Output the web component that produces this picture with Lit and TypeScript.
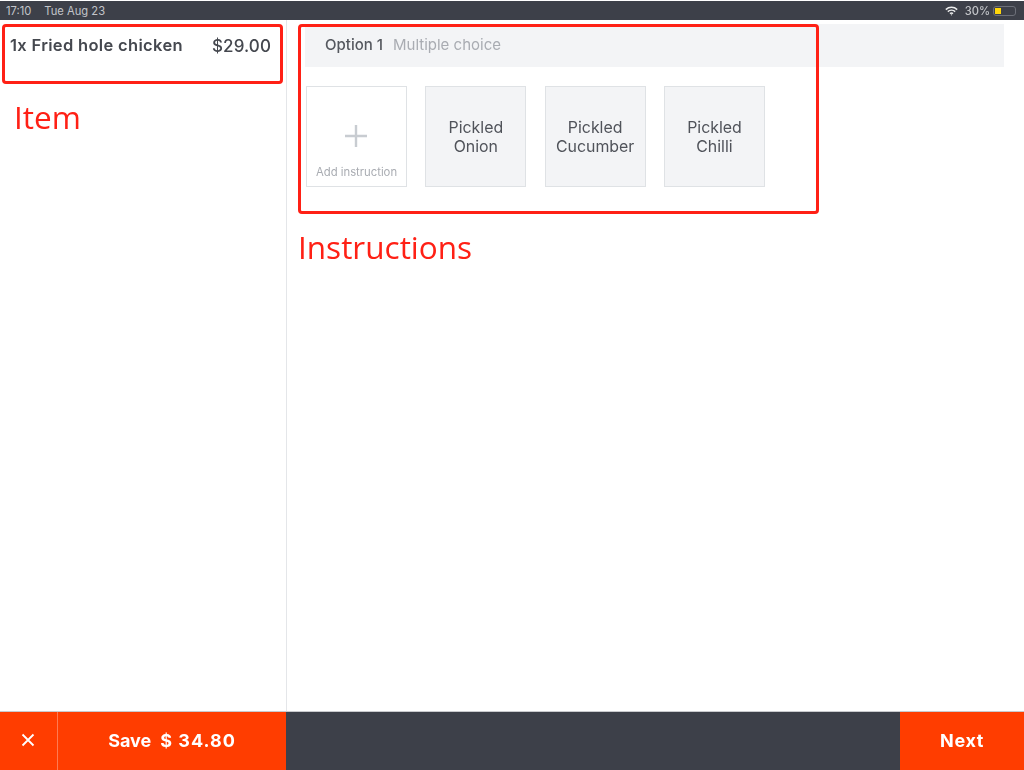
import { LitElement, html, css } from "lit";
import { customElement } from "lit/decorators.js";

@customElement("app-root")
export class AppRoot extends LitElement {
  static styles = css`
    :host { display: block; position: relative; width: 1024px; height: 770px; overflow: hidden; background: #fff; font-family: Inter, "Liberation Sans", sans-serif; color: #3d4049; }
    .page { display: flex; flex-direction: column; height: 770px; filter: blur(0.45px); }
    .status { height: 19px; box-sizing: border-box; margin-top: 1px; background: #3d4049; color: #c3c5c9; display: flex; align-items: center; padding: 0 8px 0 6px; font-size: 11.2px; flex: none; }
    .status .date { margin-left: 13px; }
    .status .right { margin-left: auto; display: flex; align-items: center; gap: 3px; font-weight: 500; }
    .status .right svg { margin-right: 4px; }
    .battery { width: 23px; height: 10px; box-sizing: border-box; border: 1px solid #6d7079; border-radius: 3px; padding: 1px; display: flex; }
    .battery i { display: block; width: 6px; background: #ffd60a; }
    .main { flex: 1; display: flex; min-height: 0; }
    .left { width: 287px; box-sizing: border-box; border-right: 1px solid #e4e6e9; padding: 16px 15px 0 10px; flex: none; }
    .item { display: flex; justify-content: space-between; align-items: flex-start; }
    .item .name { font-size: 16.5px; font-weight: 600; line-height: 19px; color: #45484f; letter-spacing: 0.33px; }
    .item .price { font-size: 17px; font-weight: 500; line-height: 19px; margin-top: 1px; color: #45484f; letter-spacing: 0.1px; }
    .right-pane { flex: 1; padding: 4px 20px 0 18px; }
    .head { height: 43px; background: #f3f4f6; display: flex; align-items: center; padding: 0 0 3px 20px; box-sizing: border-box; gap: 10px; font-size: 15px; }
    .head .opt { font-weight: 500; color: #55585f; }
    .head .type { color: #a9acb2; }
    .cards { display: flex; gap: 18.33px; margin-top: 19px; margin-left: 1px; }
    .card { width: 101px; height: 101px; box-sizing: border-box; border: 1px solid #dfe2e5; background: #f3f4f6; display: flex; align-items: center; justify-content: center; text-align: center; font-size: 15.9px; line-height: 18.5px; color: #50535a; padding-top: 2px; }
    .card.add { background: #fff; flex-direction: column; justify-content: flex-start; padding: 37px 0 0; }
    .card.add svg { display: block; margin-right: 2px; }
    .card.add span { font-size: 11.3px; line-height: 13px; color: #a9acb2; margin-top: 18px; white-space: nowrap; }
    .bottom { height: 59px; flex: none; display: flex; background: #3d4049; color: #fff; border-top: 1px solid #c9cacd; box-sizing: border-box; }
    .close { width: 58px; background: #ff3d00; display: flex; align-items: center; justify-content: center; border-right: 1px solid #ff7a52; flex: none; padding: 0 2px 2px 0; box-sizing: border-box; }
    .save { width: 228px; background: #ff3d00; display: flex; align-items: center; justify-content: center; gap: 9px; font-size: 18px; font-weight: 700; flex: none; padding-bottom: 2px; box-sizing: border-box; }
    .save .amt { letter-spacing: 1px; }
    .spacer { flex: 1; }
    .next { width: 124px; background: #ff3d00; display: flex; align-items: center; justify-content: center; font-size: 18px; font-weight: 700; letter-spacing: 0.6px; flex: none; padding-bottom: 2px; box-sizing: border-box; }
    .anno-box { position: absolute; box-sizing: border-box; border: 3px solid #ff2015; border-radius: 4px; }
    .anno-box.a { left: 2px; top: 24px; width: 281px; height: 60px; }
    .anno-box.b { left: 298px; top: 24px; width: 521px; height: 190px; }
    .anno-text { position: absolute; font-family: "Open Sans", "Noto Sans", sans-serif; font-size: 31.5px; line-height: 40px; color: #ff2015; }
    .anno-text.a { left: 14px; top: 97px; }
    .anno-text.b { left: 298px; top: 227px; }
  `;

  render() {
    const cards = [["Pickled", "Onion"], ["Pickled", "Cucumber"], ["Pickled", "Chilli"]];
    return html`
      <div class="page">
        <div class="status">
          <span>17:10</span><span class="date">Tue Aug 23</span>
          <div class="right">
            <svg width="13" height="10" viewBox="0 0 13 10" fill="none" stroke="#eceded" stroke-width="1.5"><path d="M0.8 3.6C4 0.6 9 0.6 12.2 3.6"/><path d="M2.8 5.6C4.9 3.7 8.1 3.7 10.2 5.6"/><path d="M5 7.6C5.9 6.8 7.1 6.8 8 7.6" /><circle cx="6.5" cy="8.8" r="0.6" fill="#eceded" stroke="none"/></svg>
            <span>30%</span>
            <div class="battery"><i></i></div>
          </div>
        </div>
        <div class="main">
          <div class="left">
            <div class="item"><span class="name">1x Fried hole chicken</span><span class="price">$29.00</span></div>
          </div>
          <div class="right-pane">
            <div class="head"><span class="opt">Option 1</span><span class="type">Multiple choice</span></div>
            <div class="cards">
              <div class="card add">
                <svg width="24" height="24" viewBox="0 0 24 24" stroke="#c8ccd1" stroke-width="2.4" fill="none"><path d="M12 1v22M1 12h22"/></svg>
                <span>Add instruction</span>
              </div>
              ${cards.map((c) => html`<div class="card"><div>${c[0]}<br />${c[1]}</div></div>`)}
            </div>
          </div>
        </div>
        <div class="bottom">
          <div class="close">
            <svg width="14" height="14" viewBox="0 0 14 14" stroke="#fff" stroke-width="1.8" fill="none"><path d="M1.5 1.5l11 11M12.5 1.5l-11 11"/></svg>
          </div>
          <div class="save"><span>Save</span><span class="amt">$ 34.80</span></div>
          <div class="spacer"></div>
          <div class="next">Next</div>
        </div>
      </div>
      <div class="anno-box a"></div>
      <div class="anno-box b"></div>
      <div class="anno-text a">Item</div>
      <div class="anno-text b">Instructions</div>
    `;
  }
}
